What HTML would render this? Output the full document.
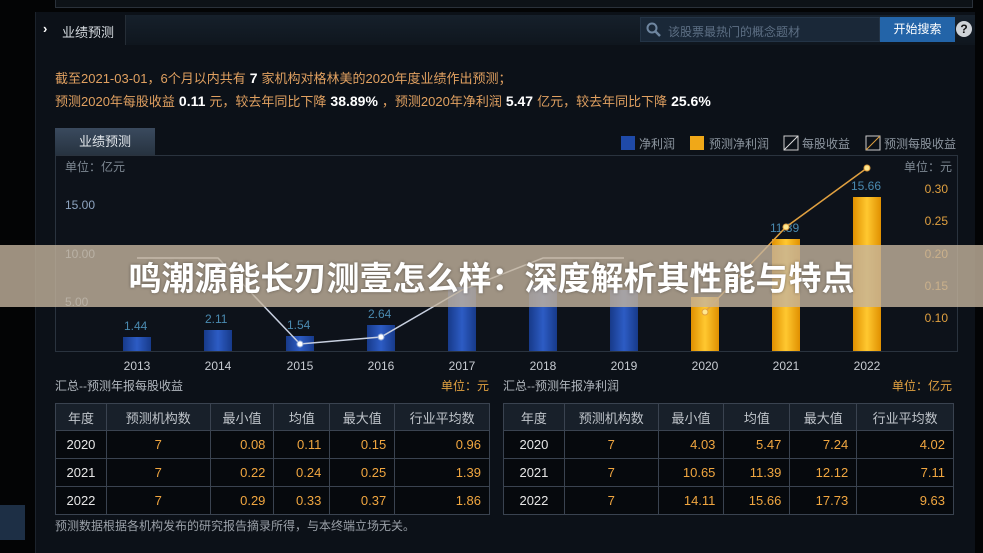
<!DOCTYPE html>
<html><head><meta charset="utf-8"><style>
*{margin:0;padding:0;box-sizing:border-box}
body{width:983px;height:553px;background:#030405;position:relative;overflow:hidden;font-family:"Liberation Sans","Noto Sans CJK SC",sans-serif;color:#c8ccd2}
.abs{position:absolute}
.panel{left:35px;top:12px;width:940px;height:541px;background:#0c1118;border-left:1px solid #1c232c}
.top{left:55px;top:0;width:918px;height:8px;background:#0d1217;border:1px solid #2a313a;border-top:none}
.hdr{left:36px;top:15px;width:939px;height:30px;background:linear-gradient(#16202b,#0f161e)}
table{border-collapse:collapse;position:absolute;font-size:13px}
td{border:1px solid #3a4350;height:28px;text-align:center;color:#e6e6e6;background:#06090d}
tr.h td{background:#18202a;color:#bfc4ca;height:27px}
td.o{color:#f0a640;text-align:right;padding-right:8px}
.l{font-size:13px;color:#e0a060}
.l b{color:#fff;font-size:14px;margin:0 4px}
</style></head><body>
<div class="abs" style="left:0;top:505px;width:25px;height:35px;background:#1d2f45"></div>
<div class="abs panel"></div>
<div class="abs top"></div>
<div class="abs hdr"></div>
<div class="abs" style="left:36px;top:15px;width:90px;height:30px;background:#0c1118;border-right:1px solid #252d36"></div>
<div class="abs" style="left:43px;top:21px;color:#fff;font-size:13px;font-weight:bold">›</div>
<div class="abs" style="left:62px;top:22px;font-size:13px;color:#d8dde2">业绩预测</div>
<div class="abs" style="left:640px;top:17px;width:240px;height:25px;background:#1a2838;border:1px solid #243446"></div>
<svg class="abs" style="left:646px;top:22px" width="16" height="16"><circle cx="6" cy="6" r="4.5" fill="none" stroke="#6f86a0" stroke-width="2"/><line x1="9.5" y1="9.5" x2="14" y2="14" stroke="#6f86a0" stroke-width="2.5"/></svg>
<div class="abs" style="left:668px;top:23px;font-size:12px;color:#5d6f84">该股票最热门的概念题材</div>
<div class="abs" style="left:880px;top:17px;width:75px;height:25px;background:#2364a8;color:#fff;font-size:12px;text-align:center;line-height:25px">开始搜索</div>
<div class="abs" style="left:956px;top:21px;width:16px;height:16px;border-radius:50%;background:#cfd3d8;color:#111;font-size:12px;font-weight:bold;text-align:center;line-height:16px">?</div>
<div class="abs l" style="left:55px;top:68px">截至2021-03-01，6个月以内共有<b>7</b>家机构对格林美的2020年度业绩作出预测；</div>
<div class="abs l" style="left:55px;top:91px">预测2020年每股收益<b>0.11</b>元，较去年同比下降<b>38.89%</b>，预测2020年净利润<b>5.47</b>亿元，较去年同比下降<b>25.6%</b></div>
<div class="abs" style="left:55px;top:128px;width:100px;height:28px;background:linear-gradient(#3a4a5e,#26323f);color:#e4e8ec;font-size:13px;text-align:center;line-height:28px">业绩预测</div>
<div class="abs" style="left:55px;top:155px;width:903px;height:197px;background:#0d121a;border:1px solid #2a333e"></div>
<svg class="abs" style="left:0;top:0" width="983" height="553" font-family="Liberation Sans" font-size="12">
<g font-size="12"><rect x="621" y="136" width="14" height="14" fill="#1f4aa8"/><text x="639" y="148" fill="#8d96a0">净利润</text>
<rect x="690" y="136" width="14" height="14" fill="#f0a818"/><text x="709" y="148" fill="#8d96a0">预测净利润</text>
<rect x="784" y="136" width="14" height="14" fill="none" stroke="#ccc"/><line x1="784" y1="150" x2="798" y2="136" stroke="#ddd"/><text x="802" y="148" fill="#8d96a0">每股收益</text>
<rect x="866" y="136" width="14" height="14" fill="none" stroke="#ccc"/><line x1="866" y1="150" x2="880" y2="136" stroke="#e0a040"/><text x="884" y="148" fill="#8d96a0">预测每股收益</text></g>
<text x="65" y="171" fill="#7d8792">单位：亿元</text><text x="904" y="171" fill="#7d8792">单位：元</text>
<g fill="#8ea4c0"><text x="65" y="209">15.00</text><text x="65" y="258">10.00</text><text x="65" y="306">5.00</text></g>
<g fill="#e0a040" text-anchor="end"><text x="948" y="193">0.30</text><text x="948" y="225">0.25</text><text x="948" y="258">0.20</text><text x="948" y="290">0.15</text><text x="948" y="322">0.10</text></g>
<defs><linearGradient id="b" x1="0" x2="1"><stop offset="0" stop-color="#173a8a"/><stop offset=".5" stop-color="#2d5cc4"/><stop offset="1" stop-color="#173a8a"/></linearGradient>
<linearGradient id="o" x1="0" x2="1"><stop offset="0" stop-color="#e09000"/><stop offset=".5" stop-color="#ffc830"/><stop offset="1" stop-color="#e09000"/></linearGradient></defs>
<g fill="url(#b)"><rect x="123" y="337" width="28" height="14"/><rect x="204" y="330" width="28" height="21"/><rect x="286" y="336" width="28" height="15"/><rect x="367" y="325" width="28" height="26"/><rect x="448" y="287" width="28" height="64"/><rect x="529" y="285" width="28" height="66"/><rect x="610" y="290" width="28" height="61"/></g>
<g fill="url(#o)"><rect x="691" y="297" width="28" height="54"/><rect x="772" y="239" width="28" height="112"/><rect x="853" y="197" width="28" height="154"/></g>
<g fill="#4a8ab0" font-size="12"><text x="124" y="330">1.44</text><text x="205" y="323">2.11</text><text x="287" y="329">1.54</text><text x="368" y="318">2.64</text><text x="770" y="232">11.39</text><text x="851" y="190">15.66</text></g>
<polyline points="137,258 218,258 300,344 381,337 462,290 543,258 624,258" fill="none" stroke="#c8d0e0" stroke-width="1.5"/>
<g fill="#fff" stroke="#8fa8d8"><circle cx="300" cy="344" r="3"/><circle cx="381" cy="337" r="3"/></g>
<polyline points="705,312 786,227 867,168" fill="none" stroke="#e0a040" stroke-width="1.5"/>
<g fill="#ffe890" stroke="#e0a040"><circle cx="705" cy="312" r="3"/><circle cx="786" cy="227" r="3"/><circle cx="867" cy="168" r="3"/></g>
<g fill="#c8ccd2" text-anchor="middle"><text x="137" y="370">2013</text><text x="218" y="370">2014</text><text x="300" y="370">2015</text><text x="381" y="370">2016</text><text x="462" y="370">2017</text><text x="543" y="370">2018</text><text x="624" y="370">2019</text><text x="705" y="370">2020</text><text x="786" y="370">2021</text><text x="867" y="370">2022</text></g>
</svg>
<div class="abs" style="left:0;top:245px;width:983px;height:62px;background:rgba(196,180,158,0.8)"></div>
<div class="abs" style="left:0;top:255px;width:983px;text-align:center;font-size:33px;font-weight:bold;color:#fff;font-family:'Noto Sans CJK SC',sans-serif;line-height:42px;text-shadow:0 0 3px rgba(0,0,0,.4)">鸣潮源能长刃测壹怎么样：深度解析其性能与特点</div>
<div class="abs" style="left:55px;top:377px;font-size:12px;color:#b0b6bd">汇总--预测年报每股收益</div>
<div class="abs" style="left:441px;top:377px;font-size:12px;color:#e0a040">单位：元</div>
<div class="abs" style="left:503px;top:377px;font-size:12px;color:#b0b6bd">汇总--预测年报净利润</div>
<div class="abs" style="left:892px;top:377px;font-size:12px;color:#e0a040">单位：亿元</div>
<table style="left:55px;top:403px;width:435px">
<colgroup><col width="51"><col width="104"><col width="64"><col width="56"><col width="65"><col width="95"></colgroup>
<tr class="h"><td>年度</td><td>预测机构数</td><td>最小值</td><td>均值</td><td>最大值</td><td>行业平均数</td></tr>
<tr><td>2020</td><td style="color:#f0a640">7</td><td class="o">0.08</td><td class="o">0.11</td><td class="o">0.15</td><td class="o">0.96</td></tr>
<tr><td>2021</td><td style="color:#f0a640">7</td><td class="o">0.22</td><td class="o">0.24</td><td class="o">0.25</td><td class="o">1.39</td></tr>
<tr><td>2022</td><td style="color:#f0a640">7</td><td class="o">0.29</td><td class="o">0.33</td><td class="o">0.37</td><td class="o">1.86</td></tr>
</table>
<table style="left:503px;top:403px;width:451px">
<colgroup><col width="61"><col width="94"><col width="66"><col width="66"><col width="67"><col width="97"></colgroup>
<tr class="h"><td>年度</td><td>预测机构数</td><td>最小值</td><td>均值</td><td>最大值</td><td>行业平均数</td></tr>
<tr><td>2020</td><td style="color:#f0a640">7</td><td class="o">4.03</td><td class="o">5.47</td><td class="o">7.24</td><td class="o">4.02</td></tr>
<tr><td>2021</td><td style="color:#f0a640">7</td><td class="o">10.65</td><td class="o">11.39</td><td class="o">12.12</td><td class="o">7.11</td></tr>
<tr><td>2022</td><td style="color:#f0a640">7</td><td class="o">14.11</td><td class="o">15.66</td><td class="o">17.73</td><td class="o">9.63</td></tr>
</table>
<div class="abs" style="left:55px;top:517px;font-size:12px;color:#9aa0a8">预测数据根据各机构发布的研究报告摘录所得，与本终端立场无关。</div>
</body></html>
